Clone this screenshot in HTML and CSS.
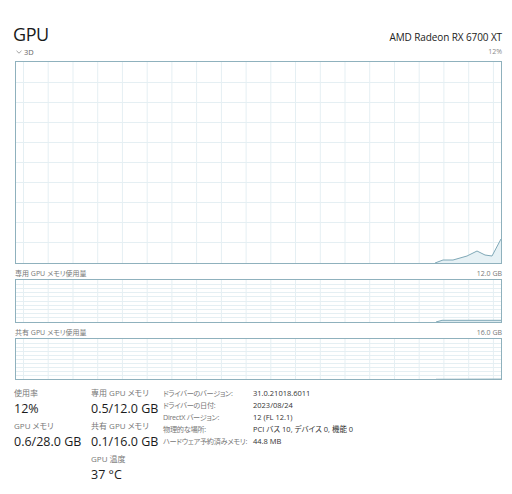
FILE: index.html
```html
<!DOCTYPE html>
<html lang="ja">
<head>
<meta charset="utf-8">
<link rel="stylesheet" href="styles.css">
</head>
<body>
<div class="page">
  <div class="header">
    <div class="title">GPU</div>
    <div class="device">AMD Radeon RX 6700 XT</div>
  </div>
  <div class="sub">
    <div class="engine"><svg class="chev" width="6" height="4" viewBox="0 0 6 4"><path d="M0.5 0.8 L3 3.2 L5.5 0.8" fill="none" stroke="#8a8a8a" stroke-width="0.8"/></svg>3D</div>
    <div class="max">12%</div>
  </div>
  <div class="chart main">
    <svg width="485" height="201" viewBox="0 0 485 201">
      <g stroke="#e5eff3" stroke-width="1">
        <path d="M7.5 0V201M32.2 0V201M57 0V201M81.7 0V201M106.4 0V201M131.2 0V201M155.9 0V201M180.6 0V201M205.4 0V201M230.1 0V201M254.8 0V201M279.5 0V201M304.3 0V201M329 0V201M353.7 0V201M378.5 0V201M403.2 0V201M427.9 0V201M452.7 0V201M477.4 0V201"/>
        <path d="M0 20.5H485M0 40.5H485M0 60.5H485M0 80.5H485M0 100.5H485M0 120.5H485M0 140.5H485M0 160.5H485M0 180.5H485"/>
      </g>
      <path d="M419 201 L427 198 L437 198 L451 194 L461 189 L469 193 L476 194 L485 177 L485 201 Z" fill="#e6f1f5"/>
      <path d="M419 201 L427 198 L437 198 L451 194 L461 189 L469 193 L476 194 L485 177" fill="none" stroke="#7fa8b7" stroke-width="1"/>
    </svg>
  </div>
  <div class="label-row">
    <div>専用 GPU メモリ使用量</div>
    <div>12.0 GB</div>
  </div>
  <div class="chart mem">
    <svg width="485" height="42" viewBox="0 0 485 42">
      <g stroke="#e5eff3" stroke-width="1">
        <path d="M7.5 0V42M32.2 0V42M57 0V42M81.7 0V42M106.4 0V42M131.2 0V42M155.9 0V42M180.6 0V42M205.4 0V42M230.1 0V42M254.8 0V42M279.5 0V42M304.3 0V42M329 0V42M353.7 0V42M378.5 0V42M403.2 0V42M427.9 0V42M452.7 0V42M477.4 0V42"/>
        <path d="M0 4.5H485M0 8.5H485M0 12.5H485M0 16.5H485M0 21.5H485M0 25.5H485M0 29.5H485M0 33.5H485M0 37.5H485"/>
      </g>
      <path d="M420 42 L426 40.3 L485 40.3 L485 42 Z" fill="#dcebf0"/>
      <path d="M420 42 L426 40.3 L485 40.3" fill="none" stroke="#7fa8b7" stroke-width="1"/>
    </svg>
  </div>
  <div class="label-row">
    <div>共有 GPU メモリ使用量</div>
    <div>16.0 GB</div>
  </div>
  <div class="chart mem">
    <svg width="485" height="40" viewBox="0 0 485 40">
      <g stroke="#e5eff3" stroke-width="1">
        <path d="M7.5 0V40M32.2 0V40M57 0V40M81.7 0V40M106.4 0V40M131.2 0V40M155.9 0V40M180.6 0V40M205.4 0V40M230.1 0V40M254.8 0V40M279.5 0V40M304.3 0V40M329 0V40M353.7 0V40M378.5 0V40M403.2 0V40M427.9 0V40M452.7 0V40M477.4 0V40"/>
        <path d="M0 4.5H485M0 8.5H485M0 12.5H485M0 16.5H485M0 20.5H485M0 24.5H485M0 28.5H485M0 32.5H485M0 36.5H485"/>
      </g>
      <path d="M420 40 L485 39.6" fill="none" stroke="#9dbcc7" stroke-width="0.6"/>
    </svg>
  </div>
  <div class="stats">
    <div class="col c1">
      <div class="k">使用率</div>
      <div class="v">12%</div>
      <div class="k">GPU メモリ</div>
      <div class="v">0.6/28.0 GB</div>
    </div>
    <div class="col c2">
      <div class="k">専用 GPU メモリ</div>
      <div class="v">0.5/12.0 GB</div>
      <div class="k">共有 GPU メモリ</div>
      <div class="v">0.1/16.0 GB</div>
      <div class="k">GPU 温度</div>
      <div class="v">37 °C</div>
    </div>
    <div class="details">
      <div class="dk">ドライバーのバージョン:</div><div class="dv">31.0.21018.6011</div>
      <div class="dk">ドライバーの日付:</div><div class="dv">2023/08/24</div>
      <div class="dk">DirectX バージョン:</div><div class="dv">12 (FL 12.1)</div>
      <div class="dk">物理的な場所:</div><div class="dv">PCI バス 10, デバイス 0, 機能 0</div>
      <div class="dk">ハードウェア予約済みメモリ:</div><div class="dv">44.8 MB</div>
    </div>
  </div>
</div>
</body>
</html>
```
FILE: styles.css
```css
html, body {
  margin: 0;
  padding: 0;
  background: #ffffff;
}
body {
  font-family: "Open Sans", "Noto Sans CJK JP", sans-serif;
  color: #1b1b1b;
  font-feature-settings: "palt";
}
.page {
  width: 487px;
  padding: 0 10px 0 15px;
}
.header {
  display: flex;
  justify-content: space-between;
  align-items: baseline;
  margin-top: 25px;
  height: 18px;
}
.title {
  font-size: 18px;
  line-height: 18px;
  margin-left: -2px;
  letter-spacing: -0.4px;
  color: #1a1a1a;
}
.device {
  font-size: 10px;
  line-height: 18px;
  letter-spacing: -0.1px;
  color: #222;
}
.sub {
  display: flex;
  justify-content: space-between;
  align-items: center;
  height: 10px;
  margin-top: 4px;
  font-size: 7.5px;
  line-height: 10px;
  color: #666;
}
.engine {
  display: flex;
  align-items: center;
  gap: 2px;
}
.chev {
  display: block;
  margin-left: 1px;
}
.max {
  color: #8a8a8a;
  font-size: 7px;
}
.chart {
  border: 1px solid #8fb1bd;
  background: #ffffff;
}
.chart svg {
  display: block;
}
.main {
  margin-top: 4px;
}
.label-row {
  display: flex;
  justify-content: space-between;
  font-size: 7px;
  line-height: 9px;
  color: #777;
  margin-top: 5px;
  margin-bottom: 1px;
}
.stats {
  display: flex;
  margin-top: 8px;
  margin-left: -1px;
}
.col {
  display: flex;
  flex-direction: column;
}
.c1 {
  width: 77px;
}
.c2 {
  width: 72px;
}
.k {
  font-size: 8px;
  line-height: 10px;
  color: #777;
}
.v {
  font-size: 12.5px;
  line-height: 22px;
  margin-bottom: 1px;
  color: #1b1b1b;
}
.details {
  display: grid;
  grid-template-columns: 90px auto;
  grid-auto-rows: 12px;
  margin-top: -1.5px;
  font-size: 7.5px;
  line-height: 12px;
  white-space: nowrap;
}
.dk {
  color: #777;
  font-size: 7.2px;
  letter-spacing: -0.3px;
}
.dv {
  color: #333;
}
```
